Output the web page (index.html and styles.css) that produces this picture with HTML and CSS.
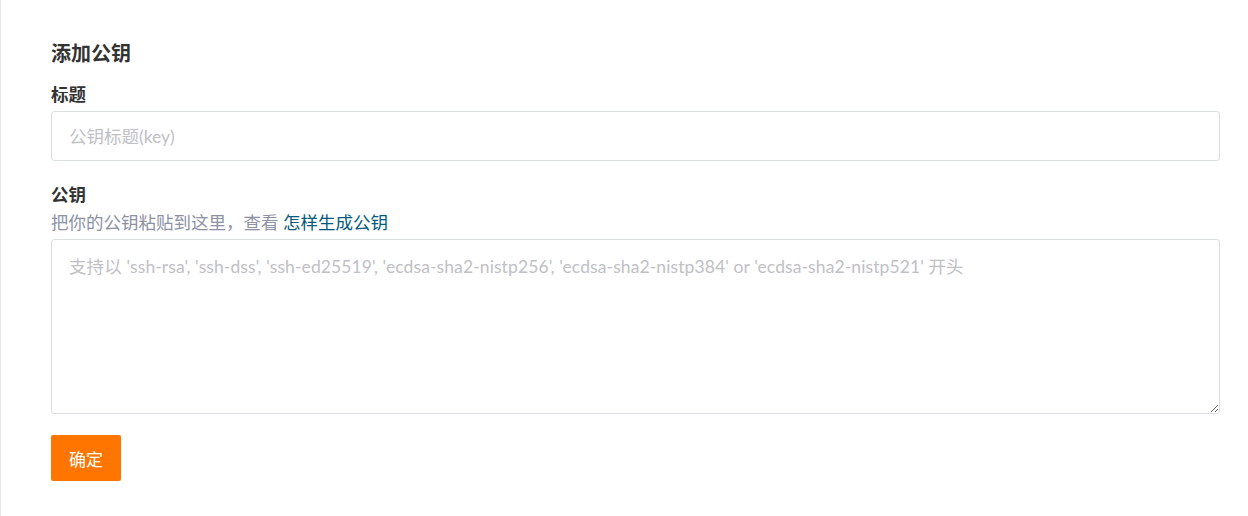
FILE: index.html
```html
<!DOCTYPE html>
<html lang="zh-CN">
<head>
<meta charset="utf-8">
<link rel="stylesheet" href="styles.css">
</head>
<body>
<div class="panel">
  <h3 class="title">添加公钥</h3>
  <form class="form">
    <div class="field">
      <label class="label">标题</label>
      <input class="input" type="text" placeholder="公钥标题(key)">
    </div>
    <div class="field">
      <label class="label">公钥</label>
      <div class="help">把你的公钥粘贴到这里，查看 <a class="link" href="#">怎样生成公钥</a></div>
      <textarea class="textarea" placeholder="支持以 'ssh-rsa', 'ssh-dss', 'ssh-ed25519', 'ecdsa-sha2-nistp256', 'ecdsa-sha2-nistp384' or 'ecdsa-sha2-nistp521' 开头"></textarea>
    </div>
    <button class="btn" type="button">确定</button>
  </form>
</div>
</body>
</html>
```
FILE: styles.css
```css
html, body {
  margin: 0;
  padding: 0;
  background: #fff;
  height: 100%;
}
body {
  font-family: "Lato", "Noto Sans CJK SC", sans-serif;
  color: #333;
}
.panel {
  box-sizing: border-box;
  min-height: 100%;
  border-left: 1px solid #e3e6ec;
  padding: 39px 28px 20px 50px;
}
.title {
  margin: 0 0 15px;
  font-size: 20px;
  line-height: 28px;
  font-weight: 700;
  color: #333;
}
.form {
  display: flex;
  flex-direction: column;
}
.field {
  display: flex;
  flex-direction: column;
  margin-bottom: 21px;
}
.label {
  font-size: 17.5px;
  font-weight: 700;
  line-height: 26px;
  color: #333;
  margin-bottom: 3px;
}
.help {
  font-size: 17.5px;
  line-height: 24px;
  color: #8c92a4;
  margin-top: 0;
  margin-bottom: 4px;
}
.link {
  color: #005980;
  text-decoration: none;
}
.input, .textarea {
  box-sizing: border-box;
  width: 100%;
  border: 1px solid #dcdee6;
  border-radius: 3px;
  font-family: inherit;
  font-size: 17.5px;
  color: #333;
  padding: 0 17px;
  outline: none;
  background: #fff;
  margin: 0;
}
.input {
  height: 50px;
}
.textarea {
  display: block;
  height: 175px;
  padding-top: 15px;
  resize: vertical;
  line-height: 24px;
  letter-spacing: 0.1px;
}
.input::placeholder, .textarea::placeholder {
  color: #c0c0c6;
}
.btn {
  align-self: flex-start;
  width: 70px;
  height: 46px;
  border: none;
  border-radius: 2px;
  background: #ff7500;
  color: #fff;
  font-family: inherit;
  font-size: 17px;
  cursor: pointer;
  padding: 0;
}
```
